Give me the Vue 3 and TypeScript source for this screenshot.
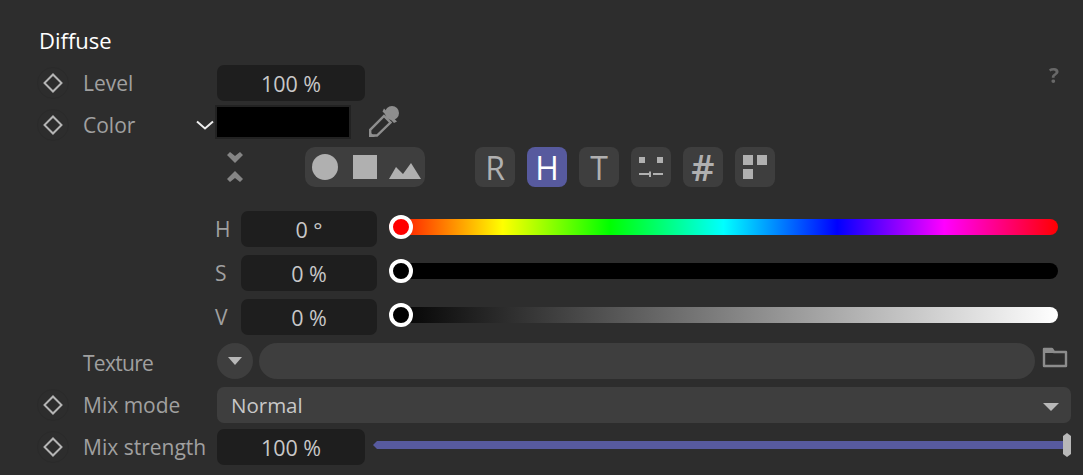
<script setup lang="ts">
type Channel = { name: string; value: string; track: string; knob: string };

const modes = ['R', 'H', 'T'];

const channels: Channel[] = [
  {
    name: 'H',
    value: '0 °',
    track: 'linear-gradient(to right, #f00, #ff0 17%, #0f0 33%, #0ff 50%, #00f 67%, #f0f 83%, #f00)',
    knob: '#f00',
  },
  { name: 'S', value: '0 %', track: '#000', knob: '#000' },
  { name: 'V', value: '0 %', track: 'linear-gradient(to right, #000, #fff)', knob: '#000' },
];
</script>

<template>
  <div class="panel">
    <h2 class="title">Diffuse</h2>
    <span class="help">?</span>

    <div class="row level">
      <span class="key"><i></i></span>
      <label class="name">Level</label>
      <div class="field">100 %</div>
    </div>

    <div class="row color">
      <span class="key"><i></i></span>
      <label class="name">Color</label>
      <svg class="expand" width="18" height="10" viewBox="0 0 18 10">
        <path d="M1 1.5l8 7 8-7" fill="none" stroke="#eee" stroke-width="2" />
      </svg>
      <div class="swatch"></div>
      <svg class="picker" width="34" height="34" viewBox="0 0 34 34">
        <path d="M3.2 29.8v-4L17 12l6.5 6.5L10 31.5H3.2z" fill="none" stroke="#8e8e8e" stroke-width="2.4" />
        <path d="M2 33v-6l6 6z" fill="#8e8e8e" />
        <circle cx="25" cy="9" r="7" fill="#8e8e8e" />
        <path d="M17 4.5l13 13-3 1.5-11.500-11.500z" fill="#8e8e8e" />
      </svg>
    </div>

    <div class="tools">
      <svg class="collapse" width="16" height="32" viewBox="0 0 16 32">
        <path d="M0 4l3-3 5 4 5-4 3 3-8 8zM0 28l3 3 5-4 5 4 3-3-8-8z" fill="#858585" />
      </svg>
      <div class="shapes">
        <svg width="120" height="40" viewBox="0 0 120 40">
          <circle cx="20" cy="20" r="13" fill="#b0b0b0" />
          <rect x="48" y="8" width="24" height="24" fill="#b0b0b0" />
          <path d="M84 32l7-12 7 7 8-11 10 16z" fill="#b0b0b0" />
        </svg>
      </div>
      <div class="modes">
        <button v-for="m in modes" :key="m" class="mode" :class="{ active: m === 'H' }">{{ m }}</button>
        <button class="mode">
          <svg width="40" height="40" viewBox="0 0 40 40">
            <path d="M8 10h6v6H8zM26 10h6v6h-6z" fill="#b0b0b0" />
            <path d="M8 27h11M22 27h10M19 24.500v5.500" stroke="#b0b0b0" stroke-width="2" fill="none" />
          </svg>
        </button>
        <button class="mode hash">#</button>
        <button class="mode">
          <svg width="40" height="40" viewBox="0 0 40 40">
            <path d="M8 8h10v10H8zM22 8h10v10H22zM8 22h10v10H8z" fill="#b0b0b0" />
          </svg>
        </button>
      </div>
    </div>

    <div v-for="c in channels" :key="c.name" class="channel">
      <label class="chan-name">{{ c.name }}</label>
      <div class="field chan-field">{{ c.value }}</div>
      <div class="slider">
        <div class="track" :style="{ background: c.track }"></div>
        <div class="knob" :style="{ background: c.knob }"></div>
      </div>
    </div>

    <div class="row texture">
      <span class="key blank"></span>
      <label class="name">Texture</label>
      <button class="drop">
        <svg width="16" height="10" viewBox="0 0 16 10"><path d="M1 1h14L8 9z" fill="#b8b8b8" /></svg>
      </button>
      <div class="path"></div>
      <svg class="folder" width="26" height="24" viewBox="0 0 26 24">
        <path d="M2 21V4h8l2 3h12v14z" fill="none" stroke="#8c8c8c" stroke-width="2.4" stroke-linejoin="round" />
        <path d="M2 5h8l2 3H2z" fill="#8c8c8c" />
      </svg>
    </div>

    <div class="row mix-mode">
      <span class="key"><i></i></span>
      <label class="name">Mix mode</label>
      <div class="select">
        <span>Normal</span>
        <svg class="arrow" width="16" height="8" viewBox="0 0 16 8"><path d="M0 0h16L8 8z" fill="#b8b8b8" /></svg>
      </div>
    </div>

    <div class="row mix-strength">
      <span class="key"><i></i></span>
      <label class="name">Mix strength</label>
      <div class="field strong">100 %</div>
      <div class="strength">
        <div class="bar"></div>
        <div class="grip"></div>
      </div>
    </div>
  </div>
</template>

<style scoped>
.panel {
  position: relative;
  width: 1083px;
  height: 475px;
  box-sizing: border-box;
  padding: 24px 12px 0 37px;
  background: #2d2d2d;
  font-family: "Open Sans", "Noto Sans", sans-serif;
  font-size: 21px;
  color: #a0a0a0;
  overflow: hidden;
}

.title {
  margin: 0 0 0 2px;
  height: 41px;
  line-height: 32px;
  font-size: 22px;
  font-weight: 400;
  color: #fff;
}

/* sits in the panel corner */
.help {
  position: absolute;
  left: 1049px;
  top: 61px;
  font-size: 21px;
  font-weight: 700;
  color: #686868;
  filter: blur(0.5px);
}

.row {
  display: flex;
  align-items: center;
  height: 36px;
}

.key {
  flex: none;
  display: flex;
  align-items: center;
  justify-content: center;
  width: 32px;
  height: 32px;
  box-sizing: border-box;
  border: 1px solid #2a2a2a;
  border-radius: 50%;
}

.key i {
  display: block;
  width: 10px;
  height: 10px;
  border: 2px solid #b4b4b4;
  transform: rotate(45deg);
}

.key.blank {
  border-color: transparent;
}

.name {
  flex: none;
  margin-left: 14px;
  width: 134px;
  white-space: nowrap;
}

.field {
  display: flex;
  align-items: center;
  justify-content: center;
  width: 148px;
  height: 36px;
  border-radius: 7px;
  background: #1e1e1e;
  color: #c8c8c8;
  font-size: 21.5px;
}

.color {
  margin-top: 6px;
}

.color .name {
  width: 113px;
}

.expand {
  flex: none;
  margin-right: 1px;
}

.swatch {
  flex: none;
  width: 132px;
  height: 30px;
  margin-top: -6px;
  border: 2px solid #222;
  background: #000;
}

.picker {
  flex: none;
  margin-left: 16px;
  margin-top: -8px;
}

.tools {
  display: flex;
  align-items: center;
  height: 40px;
  margin-top: 4px;
}

.collapse {
  flex: none;
  margin-left: 190px;
}

.shapes {
  display: flex;
  height: 40px;
  margin-left: 62px;
  border-radius: 10px;
  background: #3e3e3e;
}

.modes {
  display: flex;
  gap: 12px;
  margin-left: 50px;
}

.mode {
  display: flex;
  align-items: center;
  justify-content: center;
  width: 40px;
  height: 40px;
  padding: 0;
  border: 0;
  border-radius: 8px;
  background: #3e3e3e;
  font-family: inherit;
  font-size: 32px;
  color: #b0b0b0;
}

.mode.active {
  background: #575a9e;
  color: #fff;
}

.mode.hash {
  font-size: 36px;
  font-weight: 600;
}

.channel {
  display: flex;
  align-items: center;
  height: 36px;
  margin-bottom: 8px;
}

.tools + .channel {
  margin-top: 24px;
}

.chan-name {
  width: 204px;
  padding-left: 178px;
  box-sizing: border-box;
}

.chan-field {
  width: 136px;
}

.slider {
  position: relative;
  flex: none;
  width: 669px;
  height: 16px;
  margin-left: 12px;
  margin-top: -4px;
}

.track {
  height: 16px;
  border-radius: 8px;
}

/* knob rides over the track */
.knob {
  position: absolute;
  left: 0;
  top: -4px;
  width: 24px;
  height: 24px;
  box-sizing: border-box;
  border: 4px solid #fff;
  border-radius: 50%;
}

.texture .name {
  padding-top: 3px;
  letter-spacing: -0.7px;
}

.drop {
  flex: none;
  display: flex;
  align-items: center;
  justify-content: center;
  width: 36px;
  height: 36px;
  padding: 0;
  border: 0;
  border-radius: 50%;
  background: #3e3e3e;
}

.path {
  flex: none;
  width: 776px;
  height: 36px;
  margin-left: 6px;
  border-radius: 18px;
  background: #3e3e3e;
}

.folder {
  flex: none;
  margin-left: 7px;
  margin-top: -8px;
}

.mix-mode {
  margin-top: 8px;
}

.select {
  flex: 1;
  display: flex;
  align-items: center;
  justify-content: space-between;
  height: 36px;
  padding: 0 12px 0 14px;
  border-radius: 7px;
  background: #3e3e3e;
  color: #c8c8c8;
  font-size: 20.5px;
}

.arrow {
  margin-top: 4px;
}

.mix-strength {
  margin-top: 6px;
}

.strong {
  flex: none;
}

.strength {
  position: relative;
  flex: 1;
  height: 8px;
  margin-left: 8px;
  margin-top: -4px;
}

.bar {
  height: 8px;
  background: #575a9e;
  clip-path: polygon(0 50%, 4px 0, 100% 0, 100% 100%, 4px 100%);
}

/* handle stands over the end of the bar */
.grip {
  position: absolute;
  right: 0;
  top: -8px;
  width: 8px;
  height: 24px;
  background: #b8b8b8;
  clip-path: polygon(50% 0, 100% 12%, 100% 88%, 50% 100%, 0 88%, 0 12%);
}
</style>

<style>
html,
body {
  background: #2d2d2d;
}
</style>
